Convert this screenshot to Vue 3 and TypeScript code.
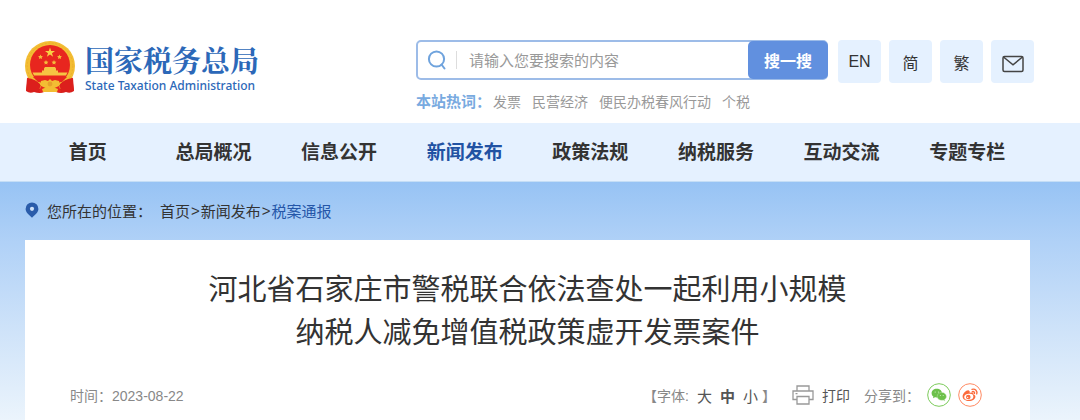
<script setup lang="ts">
import { ref } from 'vue'

interface NavItem {
  label: string
  active?: boolean
}

const keyword = ref('')
const hotWords: string[] = ['发票', '民营经济', '便民办税春风行动', '个税']
const navItems: NavItem[] = [
  { label: '首页' },
  { label: '总局概况' },
  { label: '信息公开' },
  { label: '新闻发布', active: true },
  { label: '政策法规' },
  { label: '纳税服务' },
  { label: '互动交流' },
  { label: '专题专栏' },
]
const fontSizes: string[] = ['大', '中', '小']
const currentSize = ref('中')
</script>

<template>
  <div class="page">
    <header class="header">
      <a class="logo" href="#">
        <svg class="emblem" viewBox="0 0 52 54" aria-hidden="true">
          <path d="M4 36 L2 51 Q6 54 10 52 Q16 54 20 52 L32 52 Q37 54 42 52 Q46 54 50 51 L48 36Z" fill="#d81f1c" />
          <circle cx="26" cy="26" r="25" fill="#f3bd33" />
          <circle cx="26" cy="26" r="22.8" fill="none" stroke="#ecb02d" stroke-width="1" stroke-dasharray="2 1.5" />
          <circle cx="26" cy="25" r="20" fill="#e8261f" />
          <path d="M26 7.500 L27.200 11 H31 L28 13.200 L29.100 16.800 L26 14.600 L22.900 16.800 L24 13.200 L21 11 H24.800Z" fill="#f8cf45" />
          <g fill="#f5bd3c">
            <path d="M16.500 14.500 l.7 1.500 1.700.2-1.200 1.200.3 1.700-1.500-.8-1.500.8.3-1.700-1.200-1.200 1.700-.2z" />
            <path d="M35.500 14.500 l.7 1.500 1.700.2-1.200 1.200.3 1.700-1.500-.8-1.500.8.3-1.700-1.200-1.200 1.700-.2z" />
            <path d="M22 20 l.7 1.500 1.700.2-1.200 1.200.3 1.700-1.500-.8-1.500.8.3-1.700-1.200-1.200 1.700-.2z" />
            <path d="M30 20 l.7 1.500 1.700.2-1.200 1.200.3 1.700-1.500-.8-1.500.8.3-1.700-1.200-1.200 1.700-.2z" />
          </g>
          <path d="M20 28.500 L21 27 H31 L32 28.500 V30.500 H34 V32.500 H43.500 L42 35.500 H10 L8.500 32.500 H18 V30.500 H20Z" fill="#f6c443" />
          <path d="M9 37 H43 L38 42 H14Z" fill="#e8261f" />
          <path d="M3 38 Q12 39 17 45 L14 52 L9 50 L2 51Z M49 38 Q40 39 35 45 L38 52 L43 50 L50 51Z" fill="#dc1f1c" />
          <path d="M17 41 L21 40 L24 41 L26 39 L28 41 L31 40 L35 41 L36 45 L30 48 H22 L16 45Z" fill="#f3bd33" />
          <circle cx="26" cy="44" r="2.400" fill="#e6a12b" />
          <path d="M17 46 Q26 51 35 46 L37 52 H15Z" fill="#e8261f" />
          <path d="M18 49 Q26 45 34 49 L33 52 H19Z" fill="#f3bd33" />
        </svg>
        <span class="logo-text">
          <span class="logo-name">国家税务总局</span>
          <span class="logo-sub">State Taxation Administration</span>
        </span>
      </a>

      <div class="search-area">
        <form class="search" role="search" @submit.prevent>
          <label class="search-label" for="keyword" aria-label="搜索">
            <svg viewBox="0 0 20 20" aria-hidden="true">
              <circle cx="9.500" cy="9" r="7.600" />
              <path d="M14.500 14.500 L17.500 18.500" />
            </svg>
          </label>
          <input id="keyword" v-model="keyword" type="text" placeholder="请输入您要搜索的内容" />
          <button type="submit">搜一搜</button>
        </form>
        <div class="hot">
          <strong>本站热词：</strong>
          <div class="hot-words">
            <a v-for="word in hotWords" :key="word" href="#">{{ word }}</a>
          </div>
        </div>
      </div>

      <div class="tools">
        <a href="#">EN</a>
        <a href="#">简</a>
        <a href="#">繁</a>
        <a href="#" aria-label="邮箱">
          <svg viewBox="0 0 22 18" aria-hidden="true">
            <rect x="1" y="1.500" width="20" height="15" rx="1.500" />
            <path d="M1.500 2 L11 9.800 L20.500 2" />
          </svg>
        </a>
      </div>
    </header>

    <nav class="nav">
      <a v-for="item in navItems" :key="item.label" href="#" :class="{ active: item.active }">{{ item.label }}</a>
    </nav>

    <main class="main">
      <div class="crumbs">
        <svg viewBox="0 0 14 16" aria-hidden="true">
          <path d="M7 0.500 A6.400 6.400 0 0 1 13.400 6.900 C13.400 10.500 9.500 13 7 15.700 C4.500 13 .6 10.500 .6 6.900 A6.400 6.400 0 0 1 7 .5Z" fill="#2a5caa" />
          <circle cx="7" cy="6.800" r="2.100" fill="#cfe2f8" />
        </svg>
        <span class="crumb-label">您所在的位置：</span>
        <a href="#">首页</a><span class="sep">&gt;</span><a href="#">新闻发布</a><span class="sep">&gt;</span><a class="current" href="#">税案通报</a>
      </div>

      <article class="card">
        <h1>河北省石家庄市警税联合依法查处一起利用小规模<br />纳税人减免增值税政策虚开发票案件</h1>
        <div class="meta">
          <span class="date">时间：2023-08-22</span>
          <div class="sizes">
            <span>【字体:</span>
            <button
              v-for="size in fontSizes"
              :key="size"
              type="button"
              :class="{ chosen: size === currentSize }"
              @click="currentSize = size"
            >{{ size }}</button>
            <span class="bracket">】</span>
          </div>
          <button class="print" type="button">
            <svg viewBox="0 0 22 20" aria-hidden="true">
              <path d="M5 6 V1 H17 V6 M5 14.500 H1 V6 H21 V14.500 H17 M5 11.500 H17 V19 H5Z M3.500 8.700 H5.500" />
            </svg>
            <span>打印</span>
          </button>
          <span class="share-label">分享到：</span>
          <a class="share" href="#" aria-label="微信">
            <svg viewBox="0 0 24 24" aria-hidden="true">
              <circle cx="12" cy="12" r="11.300" fill="none" stroke="#7ccb5b" />
              <path d="M9.800 5.700 C6.700 5.700 4.600 7.700 4.600 10.200 C4.600 11.600 5.300 12.800 6.400 13.600 L6 15.300 L8 14.300 C10.500 14.900 15 13.900 15 10.200 C15 7.700 12.800 5.700 9.800 5.700Z" fill="#6cc04a" />
              <path d="M14.800 9.400 C12.200 9.400 10.200 11.100 10.200 13.400 C10.200 16.200 13.200 17.900 16.200 17.100 L17.900 18 L17.500 16.500 C18.700 15.700 19.400 14.600 19.400 13.400 C19.400 11.100 17.400 9.400 14.800 9.400Z" fill="#6cc04a" stroke="#c9ebbb" stroke-width=".4" />
              <g fill="#d9f2ce">
                <circle cx="8.200" cy="9" r=".6" /><circle cx="11.500" cy="9" r=".6" />
                <circle cx="13.400" cy="12.400" r=".5" /><circle cx="16.200" cy="12.400" r=".5" />
              </g>
            </svg>
          </a>
          <a class="share" href="#" aria-label="微博">
            <svg viewBox="0 0 24 24" aria-hidden="true">
              <circle cx="12" cy="12" r="11.300" fill="none" stroke="#ff8a63" />
              <path d="M10.800 7.500 C9 6.400 4.600 10.300 4.600 13.500 C4.600 16.400 7.800 18 11 18 C14.700 18 17.400 15.800 17.400 13.700 C17.400 12.300 16.400 11.800 15.400 11.500 C16 9.500 14.300 9 11.700 10 C12 8.900 11.800 8 10.800 7.500Z" fill="#fb6b3c" />
              <ellipse cx="10.800" cy="13.800" rx="4.600" ry="3" fill="#fff" transform="rotate(-8 10.800 13.800)" />
              <circle cx="10.300" cy="14" r="2.300" fill="#fb6b3c" />
              <circle cx="9.700" cy="14.400" r=".6" fill="#fff" />
              <path d="M14 6.300 C17.300 5.500 19.700 8 18.700 11 M14.300 8.600 C15.900 8.200 16.900 9.200 16.500 10.700" fill="none" stroke="#fb6b3c" stroke-width="1.300" stroke-linecap="round" />
            </svg>
          </a>
        </div>
      </article>
    </main>
  </div>
</template>

<style>
body {
  margin: 0;
}
</style>

<style scoped>
.page {
  min-height: 100vh;
  display: flex;
  flex-direction: column;
  background: #fff;
  color: #333;
  font-family: "Liberation Sans", "Noto Sans CJK SC", sans-serif;
  font-size: 14px;
}
.page * {
  box-sizing: border-box;
}
a {
  color: inherit;
  text-decoration: none;
}
button {
  font-family: inherit;
  border: 0;
  padding: 0;
  background: none;
  color: inherit;
  cursor: pointer;
}
.header {
  display: flex;
  align-items: flex-start;
  padding: 40px 46px 11px 24px;
}
.logo {
  flex: 0 0 392px;
  display: flex;
  gap: 9px;
}
.emblem {
  width: 52px;
  height: 54px;
}
.logo-text {
  display: flex;
  flex-direction: column;
  padding-top: 2px;
  color: #2c68b8;
}
.logo-name {
  font-family: "Noto Serif CJK SC", "Noto Sans CJK SC", serif;
  font-size: 29px;
  line-height: 36px;
  font-weight: 700;
}
.logo-sub {
  font-family: "Noto Sans", sans-serif;
  font-size: 12px;
  line-height: 16px;
  font-weight: 500;
}
.search-area {
  flex: 1;
}
.search {
  display: flex;
  height: 40px;
  border: 2px solid #9dbce8;
  border-radius: 5px;
  background: #fff;
}
.search-label {
  display: flex;
  align-items: center;
  margin: 9px 0;
  padding: 0 9px;
  border-right: 1px solid #ddd;
}
.search-label svg {
  width: 20px;
  height: 20px;
  fill: none;
  stroke: #6fa3dd;
  stroke-width: 2;
  stroke-linecap: round;
}
.search input {
  flex: 1;
  min-width: 0;
  padding: 0 0 0 12px;
  border: 0;
  outline: 0;
  background: none;
  font-family: inherit;
  font-size: 15px;
}
.search input::placeholder {
  color: #999;
}
.search button {
  width: 80px;
  margin: -1px -2px -1px 0;
  border-radius: 5px;
  background: #6190df;
  color: #fff;
  font-size: 16px;
  font-weight: 700;
}
.hot {
  display: flex;
  gap: 2px;
  padding-top: 12px;
  line-height: 20px;
  color: #999;
}
.hot strong {
  color: #78aae0;
  font-size: 15px;
}
.hot-words {
  display: flex;
  gap: 11px;
}
.tools {
  display: flex;
  gap: 8px;
  margin-left: 10px;
}
.tools a {
  display: flex;
  align-items: center;
  justify-content: center;
  width: 43px;
  height: 43px;
  border-radius: 4px;
  background: #e5f1ff;
  font-size: 16px;
}
.tools svg {
  width: 22px;
  height: 18px;
  margin-top: 4px;
  fill: none;
  stroke: #444;
  stroke-width: 1.5;
}
.nav {
  display: grid;
  grid-template-columns: repeat(8, 1fr);
  padding: 2px 50px 0 25px;
  border-bottom: 1px solid #c5def6;
  background: #e5f1ff;
  font-size: 19px;
  font-weight: 700;
  line-height: 56px;
  text-align: center;
}
.nav .active {
  color: #2152a3;
}
.main {
  flex: 1;
  display: flex;
  flex-direction: column;
  padding: 0 50px 0 25px;
  background: linear-gradient(#97c3f4 0, #b0d1f7 60px, #cfe3f9 150px, #ebf4fc 238px);
}
.crumbs {
  display: flex;
  align-items: center;
  height: 58px;
  padding-bottom: 2px;
  font-size: 15px;
}
.crumbs svg {
  width: 14px;
  height: 16px;
  margin-right: 8px;
}
.crumb-label {
  margin-right: 8px;
}
.sep {
  padding: 0 1px;
}
.crumbs .current {
  color: #2456a8;
}
.card {
  flex: 1;
  padding: 29px 0 12px;
  background: #fff;
}
h1 {
  margin: 0;
  font-size: 29px;
  font-weight: 400;
  line-height: 43px;
  text-align: center;
}
.meta {
  display: flex;
  align-items: center;
  height: 24px;
  margin-top: 28px;
  padding: 0 48px 0 45px;
  color: #888;
}
.date {
  margin-right: auto;
}
.sizes {
  display: flex;
  align-items: center;
}
.sizes button {
  margin-left: 8px;
  color: #555;
  font-size: 15px;
}
.sizes button.chosen {
  font-weight: 700;
}
.bracket {
  margin-left: 4px;
}
.print {
  display: flex;
  align-items: center;
  gap: 8px;
  margin: 0 14px 0 16px;
  color: #555;
  font-size: 14px;
}
.print svg {
  width: 22px;
  height: 20px;
  fill: none;
  stroke: #999;
  stroke-width: 1.3;
}
.share {
  display: flex;
  margin-left: 7px;
}
.share svg {
  width: 24px;
  height: 24px;
}
</style>
